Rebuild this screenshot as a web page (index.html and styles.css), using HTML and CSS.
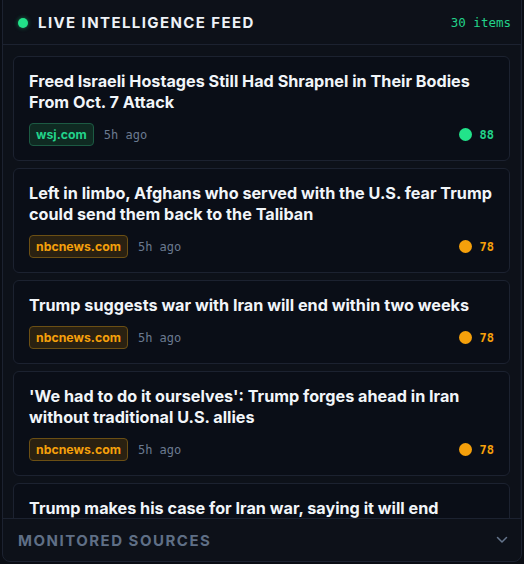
FILE: index.html
```html
<!DOCTYPE html>
<html>
<head>
<meta charset="utf-8">
<link rel="stylesheet" href="styles.css">
</head>
<body>
<div class="panel">
  <div class="header">
    <div class="title-wrap">
      <span class="live-dot"></span>
      <span class="title">LIVE INTELLIGENCE FEED</span>
    </div>
    <span class="count">30 items</span>
  </div>
  <div class="feed">
    <div class="card">
      <div class="headline">Freed Israeli Hostages Still Had Shrapnel in Their Bodies From Oct. 7 Attack</div>
      <div class="meta">
        <div class="meta-left"><span class="badge green">wsj.com</span><span class="time">5h ago</span></div>
        <div class="score green-text"><span class="dot green-dot"></span>88</div>
      </div>
    </div>
    <div class="card">
      <div class="headline">Left in limbo, Afghans who served with the U.S. fear Trump could send them back to the Taliban</div>
      <div class="meta">
        <div class="meta-left"><span class="badge orange">nbcnews.com</span><span class="time">5h ago</span></div>
        <div class="score orange-text"><span class="dot orange-dot"></span>78</div>
      </div>
    </div>
    <div class="card">
      <div class="headline">Trump suggests war with Iran will end within two weeks</div>
      <div class="meta">
        <div class="meta-left"><span class="badge orange">nbcnews.com</span><span class="time">5h ago</span></div>
        <div class="score orange-text"><span class="dot orange-dot"></span>78</div>
      </div>
    </div>
    <div class="card">
      <div class="headline">'We had to do it ourselves': Trump forges ahead in Iran without traditional U.S. allies</div>
      <div class="meta">
        <div class="meta-left"><span class="badge orange">nbcnews.com</span><span class="time">5h ago</span></div>
        <div class="score orange-text"><span class="dot orange-dot"></span>78</div>
      </div>
    </div>
    <div class="card">
      <div class="headline">Trump makes his case for Iran war, saying it will end shortly</div>
      <div class="meta">
        <div class="meta-left"><span class="badge orange">nbcnews.com</span><span class="time">5h ago</span></div>
        <div class="score orange-text"><span class="dot orange-dot"></span>78</div>
      </div>
    </div>
  </div>
  <div class="footer">
    <span class="footer-title">MONITORED SOURCES</span>
    <svg class="chevron" width="12" height="8" viewBox="0 0 12 8"><path d="M1.5 1.5 L6 6 L10.5 1.5" fill="none" stroke="#64748b" stroke-width="1.5" stroke-linecap="round" stroke-linejoin="round"/></svg>
  </div>
</div>
</body>
</html>
```

FILE: styles.css
```css
html, body {
  margin: 0;
  padding: 0;
  background: #0a0d14;
  height: 564px;
  overflow: hidden;
}
body {
  font-family: Inter, "Noto Sans", sans-serif;
}
.panel {
  margin: -8px 2px 0 2px;
  height: 570px;
  box-sizing: border-box;
  border: 1px solid #1c2230;
  border-radius: 8px;
  background: #0d1119;
  display: flex;
  flex-direction: column;
  overflow: hidden;
}
.header {
  height: 52px;
  padding: 8px 10px 0 15px;
  box-sizing: border-box;
  display: flex;
  align-items: center;
  justify-content: space-between;
  border-bottom: 1px solid #1c2230;
  flex: none;
}
.title-wrap {
  display: flex;
  align-items: center;
  gap: 10px;
}
.live-dot {
  width: 10px;
  height: 10px;
  border-radius: 50%;
  background: #22e38a;
  box-shadow: 0 0 4px rgba(34, 227, 138, 0.5);
}
.title {
  color: #eef2f7;
  font-weight: 700;
  font-size: 15px;
  letter-spacing: 1.4px;
}
.count {
  color: #22d38a;
  font-family: "DejaVu Sans Mono", "Liberation Mono", monospace;
  font-size: 12.5px;
}
.feed {
  flex: 1;
  overflow: hidden;
  padding: 11px 10px 0 10px;
  display: flex;
  flex-direction: column;
  gap: 7px;
  border-right: 1px solid #121722;
}
.card {
  flex: none;
  border: 1px solid #1c2230;
  border-radius: 6px;
  background: #0a0e17;
  padding: 14px 14px 14px 15px;
}
.headline {
  color: #f1f5f9;
  font-weight: 700;
  font-size: 16.2px;
  line-height: 21px;
}
.meta {
  margin-top: 10px;
  display: flex;
  align-items: center;
  justify-content: space-between;
}
.meta-left {
  display: flex;
  align-items: center;
  gap: 10px;
}
.badge {
  font-size: 12.3px;
  font-weight: 700;
  padding: 4px 6px;
  border-radius: 4px;
  line-height: 13px;
}
.badge.green {
  color: #22d38a;
  background: #0f2a22;
  border: 1px solid #1c5a43;
}
.badge.orange {
  color: #f5a00b;
  background: #2a2111;
  border: 1px solid #6b4f14;
}
.time {
  color: #6b7a90;
  font-family: "DejaVu Sans Mono", "Liberation Mono", monospace;
  font-size: 12px;
}
.score {
  display: flex;
  align-items: center;
  gap: 8px;
  font-family: "DejaVu Sans Mono", "Liberation Mono", monospace;
  font-size: 12px;
  font-weight: 700;
  padding-right: 1px;
}
.dot {
  width: 13px;
  height: 13px;
  border-radius: 50%;
}
.green-dot { background: #22e38a; }
.orange-dot { background: #f5a00b; }
.green-text { color: #22d38a; }
.orange-text { color: #f5a00b; }
.footer {
  flex: none;
  height: 43px;
  box-sizing: border-box;
  border-top: 1px solid #1c2230;
  display: flex;
  align-items: center;
  justify-content: space-between;
  padding: 0 13px 0 15px;
}
.footer-title {
  color: #5f6f86;
  font-weight: 700;
  font-size: 15px;
  letter-spacing: 1.5px;
}
.chevron {
  display: block;
}
```
